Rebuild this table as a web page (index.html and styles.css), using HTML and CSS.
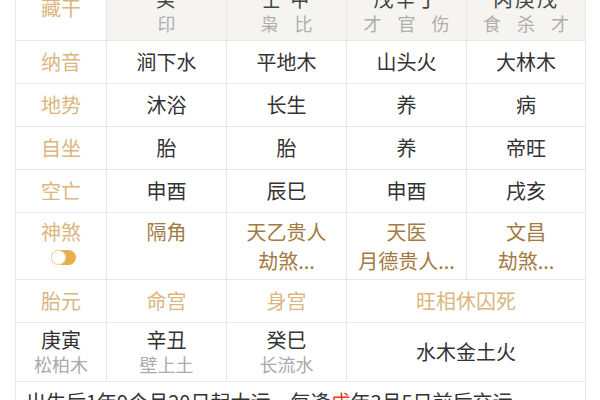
FILE: index.html
```html
<!DOCTYPE html>
<html lang="zh-CN">
<head>
<meta charset="utf-8">
<title>八字排盘</title>
<link rel="stylesheet" href="styles.css">
</head>
<body>
<table class="chart">
  <colgroup>
    <col class="c-label">
    <col class="c-col">
    <col class="c-col">
    <col class="c-col">
    <col class="c-col4">
  </colgroup>
  <tr class="row-head">
    <td class="label">藏干</td>
    <td class="head"><div class="h-main">癸</div><div class="h-sub">印</div></td>
    <td class="head"><div class="h-main">壬 甲</div><div class="h-sub">枭 比</div></td>
    <td class="head"><div class="h-main">戊辛丁</div><div class="h-sub">才 官 伤</div></td>
    <td class="head"><div class="h-main">丙庚戊</div><div class="h-sub">食 杀 才</div></td>
  </tr>
  <tr class="row">
    <td class="label">纳音</td>
    <td class="val">涧下水</td>
    <td class="val">平地木</td>
    <td class="val">山头火</td>
    <td class="val">大林木</td>
  </tr>
  <tr class="row">
    <td class="label">地势</td>
    <td class="val">沐浴</td>
    <td class="val">长生</td>
    <td class="val">养</td>
    <td class="val">病</td>
  </tr>
  <tr class="row">
    <td class="label">自坐</td>
    <td class="val">胎</td>
    <td class="val">胎</td>
    <td class="val">养</td>
    <td class="val">帝旺</td>
  </tr>
  <tr class="row">
    <td class="label">空亡</td>
    <td class="val">申酉</td>
    <td class="val">辰巳</td>
    <td class="val">申酉</td>
    <td class="val">戌亥</td>
  </tr>
  <tr class="row-shen">
    <td class="label"><div class="line">神煞</div><div class="toggle-wrap"><span class="toggle"></span></div></td>
    <td class="shen"><div class="line">隔角</div></td>
    <td class="shen"><div class="line">天乙贵人</div><div class="line">劫煞...</div></td>
    <td class="shen"><div class="line">天医</div><div class="line">月德贵人...</div></td>
    <td class="shen"><div class="line">文昌</div><div class="line">劫煞...</div></td>
  </tr>
  <tr class="row">
    <td class="label">胎元</td>
    <td class="label">命宫</td>
    <td class="label">身宫</td>
    <td class="label" colspan="2">旺相休囚死</td>
  </tr>
  <tr class="row-gong">
    <td class="val"><div class="g-main">庚寅</div><div class="g-sub">松柏木</div></td>
    <td class="val"><div class="g-main">辛丑</div><div class="g-sub">壁上土</div></td>
    <td class="val"><div class="g-main">癸巳</div><div class="g-sub">长流水</div></td>
    <td class="val" colspan="2">水木金土火</td>
  </tr>
  <tr class="row-note">
    <td class="note" colspan="5">出生后1年9个月20日起大运，每逢<span class="red">戊</span>年3月5日前后交运</td>
  </tr>
</table>
</body>
</html>
```

FILE: styles.css
```css
html, body {
  margin: 0;
  padding: 0;
  background: #ffffff;
}

body {
  font-family: "Noto Sans CJK SC", "Noto Sans", sans-serif;
  color: #333333;
}

.chart {
  margin: -26px 0 0 15px;
  width: 570px;
  table-layout: fixed;
  border-collapse: collapse;
  border: 1px solid #e8e8e8;
}

.c-label { width: 91px; }
.c-col { width: 120px; }
.c-col4 { width: 119px; }

.chart td {
  border: 1px solid #e8e8e8;
  text-align: center;
  vertical-align: middle;
  padding: 0;
  font-size: 20px;
  line-height: 24px;
}

.chart .label {
  color: #dbb67f;
}

.chart .val {
  color: #333333;
}

.chart .head {
  background: #f5f4f1;
  padding: 12px 0 5px;
}

.h-main {
  color: #444444;
  font-size: 20px;
  line-height: 24px;
  letter-spacing: 2px;
}

.h-sub {
  color: #b0aeab;
  font-size: 18px;
  line-height: 24px;
  letter-spacing: 6px;
  padding-left: 6px;
}

.chart .row td {
  height: 42px;
}

.chart .row-shen td {
  height: 62px;
  vertical-align: top;
  padding-top: 4px;
}

.chart .shen {
  color: #a37a41;
}

.line {
  line-height: 29px;
}

.toggle-wrap {
  display: flex;
  justify-content: center;
  padding: 4px 0 0 4px;
}

.toggle {
  position: relative;
  display: block;
  width: 25px;
  height: 15px;
  border-radius: 8px;
  background: #e8ad4c;
}

.toggle::before {
  content: "";
  position: absolute;
  left: 0;
  top: 0;
  width: 13px;
  height: 13px;
  border-radius: 50%;
  background: #ffffff;
  border: 1px solid #ecdcc0;
}

.chart .row-gong td {
  height: 50px;
  padding: 4px 0;
}

.g-main {
  color: #333333;
  line-height: 24px;
}

.g-sub {
  color: #aaaaaa;
  font-size: 18px;
  line-height: 24px;
}

.chart .note {
  text-align: left;
  padding: 8px 10px;
  color: #333333;
}

.red {
  color: #e23a2e;
}
```
